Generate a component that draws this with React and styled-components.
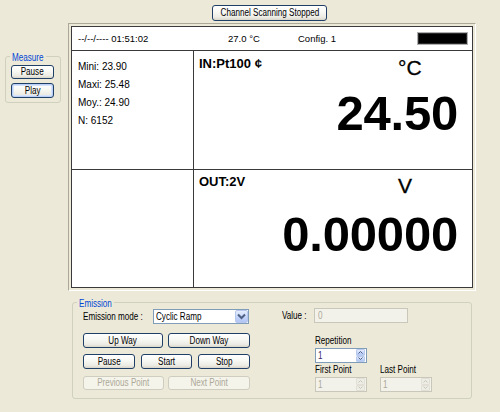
import React from "react";
import styled, { createGlobalStyle } from "styled-components";

const SANS = `"Liberation Sans", Arial, sans-serif`;

const Global = createGlobalStyle`
  html, body { margin: 0; padding: 0; background: #ece9d8; }
  body { font-family: ${SANS}; width: 500px; height: 412px; overflow: hidden; }
  * { box-sizing: border-box; }
`;

/* the UI font of the reference is a narrow sans; Liberation Sans is squeezed horizontally */
const Narrow = styled.span`
  display: inline-block;
  white-space: nowrap;
  font: 10px/12px ${SANS};
  transform: scaleX(0.81);
  transform-origin: ${(p) => p.$origin || "left"} center;
`;

const Screen = styled.div`
  display: flex;
  align-items: flex-start;
  width: 500px;
  height: 412px;
  padding-left: 5px;
  background: #ece9d8;
`;

const Group = styled.fieldset`
  margin: 0;
  padding: 0;
  min-width: 0;
  border: 1px solid #d0d0bf;
  border-radius: 3px;
`;

const Legend = styled.legend`
  width: ${(p) => p.$w}px;
  margin-left: ${(p) => p.$ml}px;
  padding: 0 2px;
  height: 12px;
  line-height: 12px;
  color: #0046d5;
  overflow: visible;
`;

const MeasureGroup = styled(Group)`
  width: 56px;
  height: 53px;
  margin-top: 50px;
  padding: 3px 0 0 5px;
  display: flex;
  flex-direction: column;
  gap: 4px;
`;

const BtnBase = styled.button`
  width: ${(p) => p.$w}px;
  height: ${(p) => p.$h || 15}px;
  margin: 0;
  padding: 0;
  color: #000;
  border: 1px solid #1f3f66;
  border-radius: 3px;
  background: linear-gradient(180deg, #ffffff 0%, #f7f7f3 45%, #ecebe4 80%, #d9d5c9 100%);
  box-shadow: ${(p) => (p.$default ? "inset 0 0 0 1px #b9cff7, inset 0 0 0 2px #d6e3fb" : "none")};
  display: flex;
  align-items: center;
  justify-content: center;
  overflow: visible;
  &:disabled {
    color: #aca899;
    border-color: #cfcdc0;
    background: #f5f4ea;
  }
`;

const Btn = ({ children, ...rest }) => (
  <BtnBase {...rest}>
    <Narrow $origin="center">{children}</Narrow>
  </BtnBase>
);

const Main = styled.div`
  display: flex;
  flex-direction: column;
  margin-left: 7px;
  width: 408px;
`;

const TopBar = styled.div`
  display: flex;
  padding: 5px 0 0 144px;
`;

const PanelFrame = styled.div`
  margin-top: 2px;
  width: 408px;
  padding: 2px;
  border: 1px solid;
  border-color: #aca899 #ffffff #ffffff #aca899;
`;

const Panel = styled.div`
  border: 1px solid #3a3a3a;
  background: #fff;
  display: flex;
  flex-direction: column;
`;

const Header = styled.div`
  height: 24px;
  border-bottom: 1px solid #3a3a3a;
  display: flex;
  align-items: center;
  padding-left: 6px;
  font: 9.5px ${SANS};
  color: #000;
`;

const HeaderItem = styled.span`
  width: ${(p) => (p.$w ? `${p.$w}px` : "auto")};
  flex: ${(p) => (p.$w ? "none" : "1")};
  white-space: nowrap;
`;

const Indicator = styled.div`
  width: 51px;
  height: 13px;
  margin-right: 4px;
  border: 1px solid #b0b0b0;
  background: #000;
  box-shadow: inset 0 0 0 1px #2a2a2a;
`;

const Grid = styled.div`
  display: grid;
  grid-template-columns: 121px 1fr;
  grid-template-rows: 118px 117px;
  gap: 1px;
  background: #3a3a3a;
`;

const StatsCell = styled.div`
  background: #fff;
  padding: 7px 0 0 6px;
  font: 10px/18px ${SANS};
  color: #000;
`;

const EmptyCell = styled.div`
  background: #fff;
`;

const ReadCell = styled.div`
  background: #fff;
  display: grid;
  grid-template-columns: 199px 1fr;
  grid-template-rows: 21px auto;
  align-items: start;
  padding: ${(p) => p.$top}px 14px 0 5px;
`;

const ChannelLabel = styled.span`
  font: bold 13px/13px ${SANS};
  color: #000;
  white-space: nowrap;
`;

const Unit = styled.span`
  font: 21px/21px ${SANS};
  color: #000;
  -webkit-text-stroke: 0.3px #000;
`;

const Value = styled.span`
  grid-column: 1 / -1;
  justify-self: end;
  margin-top: ${(p) => p.$mt}px;
  font: bold 49px/49px ${SANS};
  color: #000;
  letter-spacing: -0.2px;
`;

const EmissionGroup = styled(Group)`
  margin: 5px 0 0 4px;
  width: 400px;
  height: 103px;
  padding: 0 0 0 10px;
  display: flex;
  gap: 32px;
`;

const Col = styled.div`
  display: flex;
  flex-direction: column;
  padding-top: ${(p) => p.$pt || 0}px;
  width: ${(p) => (p.$w ? `${p.$w}px` : "auto")};
`;

const Row = styled.div`
  display: flex;
  align-items: center;
  gap: ${(p) => p.$gap || 0}px;
  margin-top: ${(p) => p.$mt || 0}px;
`;

const LabelBox = styled.div`
  width: ${(p) => (p.$w ? `${p.$w}px` : "auto")};
  height: 12px;
  color: #000;
  display: flex;
`;

const Label = ({ w, children }) => (
  <LabelBox $w={w}>
    <Narrow>{children}</Narrow>
  </LabelBox>
);

const Select = styled.div`
  width: 96px;
  height: 15px;
  border: 1px solid #7f9db9;
  background: #fff;
  display: flex;
  align-items: center;
  padding: 0 0 0 2px;
  color: #000;
`;

const SelectText = styled.div`
  flex: 1;
  display: flex;
`;

const ArrowBox = styled.div`
  width: 13px;
  height: 13px;
  border: 1px solid #b7c8ef;
  border-radius: 2px;
  background: linear-gradient(180deg, #e6eefd 0%, #c5d5fa 55%, #b2c6f4 100%);
  display: flex;
  align-items: center;
  justify-content: center;
`;

const TextBox = styled.div`
  width: ${(p) => p.$w}px;
  height: 15px;
  border: 1px solid #c9c7ba;
  background: #f3f2ea;
  padding: 0 0 0 3px;
  color: #aca899;
  display: flex;
  align-items: center;
`;

const SubBlock = styled.div`
  margin: 12px 0 0 33px;
  display: flex;
  flex-direction: column;
`;

const SpinRow = styled.div`
  display: flex;
  margin-top: 1px;
`;

const SpinCol = styled.div`
  width: ${(p) => p.$w}px;
  display: flex;
  flex-direction: column;
`;

const Spin = styled.div`
  width: 52px;
  height: 15px;
  margin-top: 1px;
  display: flex;
  border: 1px solid ${(p) => (p.$disabled ? "#c9c7ba" : "#7f9db9")};
  background: ${(p) => (p.$disabled ? "#f3f2ea" : "#fff")};
`;

const SpinText = styled.div`
  flex: 1;
  padding-left: 2px;
  display: flex;
  align-items: center;
  color: ${(p) => (p.$disabled ? "#aca899" : "#3b2a6a")};
`;

const SpinButtons = styled.div`
  width: 10px;
  display: flex;
  flex-direction: column;
  padding: 0 1px 0 0;
`;

const SpinButton = styled.div`
  flex: 1;
  display: flex;
  align-items: center;
  justify-content: center;
  border-radius: 1px;
  background: ${(p) =>
    p.$disabled
      ? "#eeede5"
      : "linear-gradient(180deg, #e4ecfd 0%, #c3d3f8 60%, #b3c7f3 100%)"};
  border: 1px solid ${(p) => (p.$disabled ? "#e2e0d6" : "#b9caef")};
`;

const ChevronDown = () => (
  <svg width="9" height="7" viewBox="0 0 9 7">
    <polyline points="1,1.5 4.5,5 8,1.5" fill="none" stroke="#4d6185" strokeWidth="2" />
  </svg>
);

const Tiny = ({ up, color }) => (
  <svg width="5" height="3" viewBox="0 0 5 3">
    <polyline
      points={up ? "0.5,2.5 2.5,0.5 4.5,2.5" : "0.5,0.5 2.5,2.5 4.5,0.5"}
      fill="none"
      stroke={color}
      strokeWidth="1"
    />
  </svg>
);

const Spinner = ({ value, disabled }) => {
  const c = disabled ? "#c9c7ba" : "#4d6185";
  return (
    <Spin $disabled={disabled}>
      <SpinText $disabled={disabled}>
        <Narrow>{value}</Narrow>
      </SpinText>
      <SpinButtons>
        <SpinButton $disabled={disabled}>
          <Tiny up color={c} />
        </SpinButton>
        <SpinButton $disabled={disabled}>
          <Tiny color={c} />
        </SpinButton>
      </SpinButtons>
    </Spin>
  );
};

export default function App() {
  return (
    <>
      <Global />
      <Screen>
        <MeasureGroup>
          <Legend $ml={-1} $w={36}>
            <Narrow>Measure</Narrow>
          </Legend>
          <Btn $w={43} $h={14}>Pause</Btn>
          <Btn $w={43} $h={15} $default>Play</Btn>
        </MeasureGroup>

        <Main>
          <TopBar>
            <Btn $w={115} $h={16}>Channel Scanning Stopped</Btn>
          </TopBar>

          <PanelFrame>
            <Panel>
              <Header>
                <HeaderItem $w={150}>--/--/---- 01:51:02</HeaderItem>
                <HeaderItem $w={70}>27.0 °C</HeaderItem>
                <HeaderItem>Config. 1</HeaderItem>
                <Indicator />
              </Header>
              <Grid>
                <StatsCell>
                  <div>Mini: 23.90</div>
                  <div>Maxi: 25.48</div>
                  <div>Moy.: 24.90</div>
                  <div>N: 6152</div>
                </StatsCell>
                <ReadCell $top={6}>
                  <ChannelLabel>IN:Pt100 ¢</ChannelLabel>
                  <Unit>°C</Unit>
                  <Value $mt={11}>24.50</Value>
                </ReadCell>
                <EmptyCell />
                <ReadCell $top={5}>
                  <ChannelLabel>OUT:2V</ChannelLabel>
                  <Unit>V</Unit>
                  <Value $mt={14}>0.00000</Value>
                </ReadCell>
              </Grid>
            </Panel>
          </PanelFrame>

          <EmissionGroup>
            <Legend $ml={-6} $w={37}>
              <Narrow>Emission</Narrow>
            </Legend>
            <Col $w={167} $pt={1}>
              <Row>
                <Label w={70}>Emission mode :</Label>
                <Select>
                  <SelectText>
                    <Narrow>Cyclic Ramp</Narrow>
                  </SelectText>
                  <ArrowBox>
                    <ChevronDown />
                  </ArrowBox>
                </Select>
              </Row>
              <Row $mt={9} $gap={5}>
                <Btn $w={80}>Up Way</Btn>
                <Btn $w={82}>Down Way</Btn>
              </Row>
              <Row $mt={6} $gap={6}>
                <Btn $w={52}>Pause</Btn>
                <Btn $w={51}>Start</Btn>
                <Btn $w={52}>Stop</Btn>
              </Row>
              <Row $mt={7} $gap={4}>
                <Btn $w={81} $h={14} disabled>Previous Point</Btn>
                <Btn $w={82} $h={14} disabled>Next Point</Btn>
              </Row>
            </Col>
            <Col>
              <Row>
                <Label w={32}>Value :</Label>
                <TextBox $w={94}>
                  <Narrow>0</Narrow>
                </TextBox>
              </Row>
              <SubBlock>
                <Label>Repetition</Label>
                <Spinner value="1" />
                <SpinRow>
                  <SpinCol $w={65}>
                    <Label>First Point</Label>
                    <Spinner value="1" disabled />
                  </SpinCol>
                  <SpinCol $w={60}>
                    <Label>Last Point</Label>
                    <Spinner value="1" disabled />
                  </SpinCol>
                </SpinRow>
              </SubBlock>
            </Col>
          </EmissionGroup>
        </Main>
      </Screen>
    </>
  );
}
